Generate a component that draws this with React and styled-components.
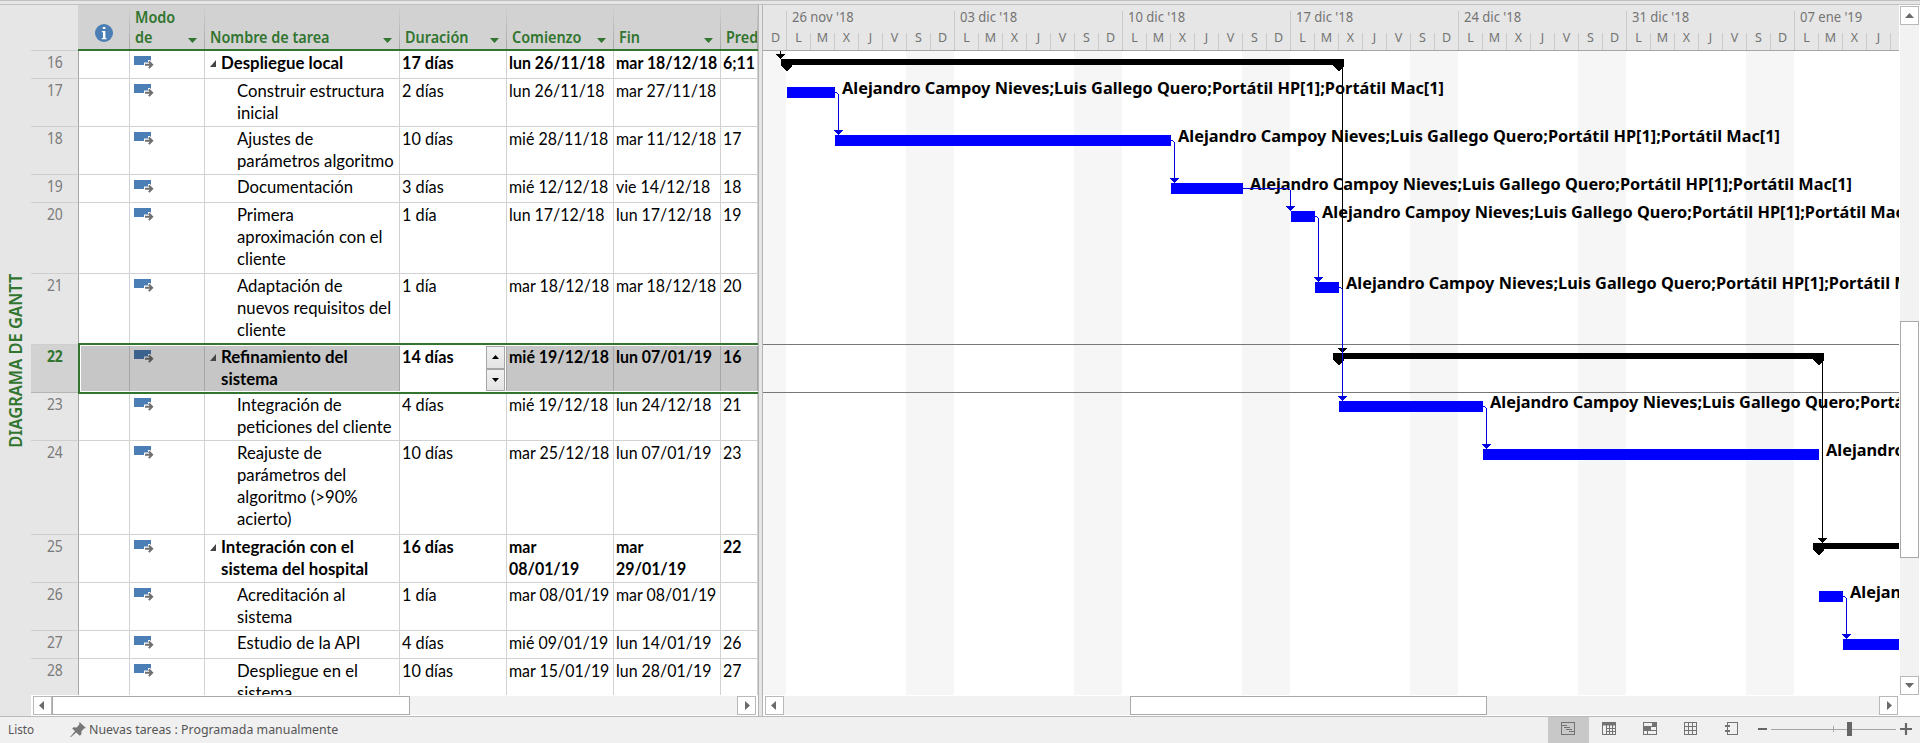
import React from "react";
import styled, { createGlobalStyle } from "styled-components";

const GlobalStyle = createGlobalStyle`
  html, body { margin: 0; padding: 0; background: #fff; }
  * { box-sizing: border-box; }
  svg { display: block; }
`;

const UI_FONT = `"Noto Sans", "Open Sans", sans-serif`;
const GRID_FONT = `Lato, "Open Sans", sans-serif`;
const GREEN = "#31752f";

/* ---------- data ---------- */

const PEOPLE = "Alejandro Campoy Nieves;Luis Gallego Quero;Portátil HP[1];Portátil Mac[1]";

const COLUMNS = [
  { key: "info", w: 51 },
  { key: "mode", w: 75, title: ["Modo", "de"] },
  { key: "name", w: 195, title: ["Nombre de tarea"] },
  { key: "dur", w: 107, title: ["Duración"] },
  { key: "start", w: 107, title: ["Comienzo"] },
  { key: "end", w: 107, title: ["Fin"] },
  { key: "pred", w: 37, title: ["Pred"], noArrow: true },
];

const ROWS = [
  { id: 16, h: 28, bold: true, name: ["Despliegue local"], dur: "17 días", start: ["lun 26/11/18"], end: ["mar 18/12/18"], pred: "6;11" },
  { id: 17, h: 48, name: ["Construir estructura", "inicial"], dur: "2 días", start: ["lun 26/11/18"], end: ["mar 27/11/18"], pred: "" },
  { id: 18, h: 48, name: ["Ajustes de", "parámetros algoritmo"], dur: "10 días", start: ["mié 28/11/18"], end: ["mar 11/12/18"], pred: "17" },
  { id: 19, h: 28, name: ["Documentación"], dur: "3 días", start: ["mié 12/12/18"], end: ["vie 14/12/18"], pred: "18" },
  { id: 20, h: 71, name: ["Primera", "aproximación con el", "cliente"], dur: "1 día", start: ["lun 17/12/18"], end: ["lun 17/12/18"], pred: "19" },
  { id: 21, h: 71, name: ["Adaptación de", "nuevos requisitos del", "cliente"], dur: "1 día", start: ["mar 18/12/18"], end: ["mar 18/12/18"], pred: "20" },
  { id: 22, h: 48, bold: true, selected: true, name: ["Refinamiento del", "sistema"], dur: "14 días", start: ["mié 19/12/18"], end: ["lun 07/01/19"], pred: "16" },
  { id: 23, h: 48, name: ["Integración de", "peticiones del cliente"], dur: "4 días", start: ["mié 19/12/18"], end: ["lun 24/12/18"], pred: "21" },
  { id: 24, h: 94, name: ["Reajuste de", "parámetros del", "algoritmo (>90%", "acierto)"], dur: "10 días", start: ["mar 25/12/18"], end: ["lun 07/01/19"], pred: "23" },
  { id: 25, h: 48, bold: true, name: ["Integración con el", "sistema del hospital"], dur: "16 días", start: ["mar", "08/01/19"], end: ["mar", "29/01/19"], pred: "22" },
  { id: 26, h: 48, name: ["Acreditación al", "sistema"], dur: "1 día", start: ["mar 08/01/19"], end: ["mar 08/01/19"], pred: "" },
  { id: 27, h: 28, name: ["Estudio de la API"], dur: "4 días", start: ["mié 09/01/19"], end: ["lun 14/01/19"], pred: "26" },
  { id: 28, h: 48, name: ["Despliegue en el", "sistema"], dur: "10 días", start: ["mar 15/01/19"], end: ["lun 28/01/19"], pred: "27" },
];

const WEEKS = ["26 nov '18", "03 dic '18", "10 dic '18", "17 dic '18", "24 dic '18", "31 dic '18", "07 ene '19"];
const DAYS = ["L", "M", "X", "J", "V", "S", "D"];

/* ---------- shell ---------- */

const Shell = styled.div`
  width: 1920px;
  height: 743px;
  display: flex;
  flex-direction: column;
  overflow: hidden;
  background: #e6e6e6;
  border-top: 1px solid #c0c0c0;
  font-family: ${UI_FONT};
`;

const Main = styled.div`
  height: 715px;
  display: flex;
  padding-top: 3px;
`;

const ViewRail = styled.div`
  width: 31px;
  flex: none;
  display: flex;
  align-items: center;
  justify-content: center;
  border-top: 1px solid #c0c0c0;
`;

const ViewName = styled.div`
  writing-mode: vertical-rl;
  transform: rotate(180deg) scaleY(0.97);
  font-size: 17px;
  line-height: 24px;
  font-weight: 600;
  color: ${GREEN};
  white-space: nowrap;
`;

const Splitter = styled.div`
  width: 5px;
  flex: none;
  border-left: 1px solid #b4b4b4;
  border-right: 1px solid #b4b4b4;
  border-top: 1px solid #c0c0c0;
`;

/* ---------- task table ---------- */

const TablePane = styled.div`
  width: 727px;
  flex: none;
  display: flex;
  flex-direction: column;
  border-top: 1px solid #c0c0c0;
`;

const HeaderRow = styled.div`
  height: 46px;
  flex: none;
  display: flex;
`;

const HeaderCorner = styled.div`
  width: 47px;
  border-bottom: 1px solid #cfcfcf;
`;

const HeaderCells = styled.div`
  display: flex;
  background: #d2d2d2;
  border-bottom: 2px solid ${GREEN};
  padding-left: 1px;
`;

const HeaderCell = styled.div`
  width: ${(p) => p.$w}px;
  height: 44px;
  display: flex;
  align-items: flex-end;
  justify-content: ${(p) => (p.$center ? "center" : "space-between")};
  padding: ${(p) => (p.$center ? "0 0 7px" : "0 7px 0 5px")};
  border-right: 1px solid;
  border-image: linear-gradient(#d2d2d2, #a6a6a6) 1;
  overflow: hidden;
`;

const HeaderTitle = styled.div`
  font-size: 16px;
  line-height: 20px;
  padding-bottom: 2px;
  font-weight: 600;
  color: ${GREEN};
  white-space: nowrap;
  transform: scaleX(0.9);
  transform-origin: 0 0;
`;

const SortArrow = styled.svg`
  flex: none;
  margin-bottom: 6px;
`;

const Rows = styled.div`
  height: 644px;
  flex: none;
  overflow: hidden;
`;

const Row = styled.div`
  display: flex;
  height: ${(p) => p.$h}px;
  position: relative;
`;

const RowNumber = styled.div`
  width: 48px;
  flex: none;
  padding: 0 14px 0 0;
  text-align: right;
  font-size: 15.5px;
  line-height: 22px;
  border-right: 1px solid #a6a6a6;
  border-bottom: 1px solid ${(p) => (p.$selected ? "#b4b4b4" : "#cfcfcf")};
  background: ${(p) => (p.$selected ? "#d2d2d2" : "#e6e6e6")};
  color: ${(p) => (p.$selected ? GREEN : "#7a7a7a")};
  font-weight: ${(p) => (p.$selected ? 700 : 400)};
`;

const NumberText = styled.span`
  display: inline-block;
  transform: scaleX(0.9);
`;

const Cell = styled.div`
  width: ${(p) => p.$w}px;
  flex: none;
  padding: 1px 0 0 2px;
  border-right: 1px solid ${(p) => (p.$selected ? "#a6a6a6" : "#d2d2d2")};
  border-bottom: 1px solid #d2d2d2;
  background: ${(p) => (p.$bg ? p.$bg : "#fff")};
  font-family: ${GRID_FONT};
  font-size: 16.5px;
  line-height: 22px;
  font-weight: ${(p) => (p.$bold ? 700 : 400)};
  color: #000;
  white-space: nowrap;
  overflow: hidden;
`;

const Line = styled.div`
  width: max-content;
  transform: scaleX(${(p) => p.$sx});
  transform-origin: 0 0;
`;

const ModeCell = styled(Cell)`
  padding: 5px 0 0 4px;
`;

const NameCell = styled(Cell)`
  display: flex;
  padding-left: ${(p) => (p.$bold ? 5 : 32)}px;
`;

const Collapse = styled.svg`
  flex: none;
  margin: 8px 5px 0 0;
`;

const DurationCell = styled(Cell)`
  display: flex;
  justify-content: space-between;
  padding-right: 1px;
`;

const Spinner = styled.div`
  width: 19px;
  height: 45px;
  display: flex;
  flex-direction: column;
`;

const SpinButton = styled.div`
  flex: 1;
  display: flex;
  align-items: center;
  justify-content: center;
  border: 1px solid #a6a6a6;
  background: linear-gradient(#f0f0f0, #e4e4e4);
`;

const SelectionFrame = styled.div`
  position: absolute;
  left: 47px;
  right: 0;
  top: -2px;
  bottom: -1px;
  border: 2px solid ${GREEN};
  border-right: 0;
  box-shadow: inset 1px 1px 0 #fff, inset 0 -1px 0 #fff;
  z-index: 2;
  pointer-events: none;
`;

/* ---------- scroll bars ---------- */

const HScroll = styled.div`
  height: 21px;
  flex: none;
  display: flex;
  padding: 1px ${(p) => p.$right}px 1px 2px;
  background: #fff;
`;

const HTrack = styled.div`
  flex: 1;
  background: #f2f2f2;
  display: flex;
`;

const HThumb = styled.div`
  width: ${(p) => p.$w}px;
  margin-left: ${(p) => p.$offset}px;
  border: 1px solid #a9a9a9;
  background: #fff;
`;

const ScrollButton = styled.div`
  width: 19px;
  height: 19px;
  flex: none;
  display: flex;
  align-items: center;
  justify-content: center;
  border: 1px solid #b9b9b9;
  background: #fff;
`;

const VScroll = styled.div`
  width: 20px;
  flex: none;
  display: flex;
  flex-direction: column;
  padding: 1px 1px 21px 0;
  background: #fff;
  border-top: 1px solid #c0c0c0;
`;

const VTrack = styled.div`
  flex: 1;
  background: #f2f2f2;
`;

const VThumb = styled.div`
  height: 237px;
  margin-top: 296px;
  border: 1px solid #a9a9a9;
  background: #fff;
`;

/* ---------- chart pane ---------- */

const ChartPane = styled.div`
  width: 1137px;
  flex: none;
  display: flex;
  flex-direction: column;
  overflow: hidden;
  border-top: 1px solid #c0c0c0;
  border-right: 1px solid #fff;
`;

const TimeScale = styled.div`
  height: 46px;
  flex: none;
  display: flex;
  overflow: hidden;
  border-bottom: 1px solid #a6a6a6;
  color: #747474;
`;

const LeadDay = styled.div`
  width: 23px;
  flex: none;
  padding-top: 28px;
`;

const Week = styled.div`
  width: 168px;
  flex: none;
  margin-top: 6px;
  border-left: 1px solid #cacaca;
`;

const WeekTitle = styled.div`
  height: 22px;
  padding-left: 5px;
  font-size: 13.5px;
  line-height: 13px;
  white-space: nowrap;
`;

const ScaleX = styled.span`
  display: inline-block;
  transform: scaleX(${(p) => p.$sx});
  transform-origin: 0 0;
`;

const DayStrip = styled.div`
  display: flex;
  margin-left: -1px;
`;

const Day = styled.div`
  width: 24px;
  height: 18px;
  text-align: center;
  font-size: 12.5px;
  line-height: 10px;
  border-left: 1px solid ${(p) => (p.$first ? "transparent" : "#cacaca")};
`;

const ChartBody = styled.svg`
  flex: none;
  background: #fff;
`;

/* ---------- status bar ---------- */

const StatusBar = styled.div`
  height: 27px;
  flex: none;
  display: flex;
  align-items: center;
  background: #f0f0f0;
  border-top: 1px solid #b9b9b9;
  color: #555;
  font-size: 13px;
`;

const StatusText = styled.div`
  width: ${(p) => p.$w}px;
  padding: 0 0 2px ${(p) => p.$pad}px;
  white-space: nowrap;
  line-height: 20px;
`;

const ViewButtons = styled.div`
  display: flex;
  margin-left: auto;
  height: 26px;
`;

const ViewButton = styled.div`
  width: 41px;
  height: 26px;
  padding: 5px 0 0 13px;
  background: ${(p) => (p.$active ? "#c8c8c8" : "transparent")};
`;

const Zoom = styled.svg`
  width: 167px;
  height: 26px;
`;

/* ---------- small drawings ---------- */

const Triangle = ({ dir, color = "#6b6b6b" }) => {
  const d = { left: "M7 1v9L2 5.5z", right: "M4 1v9l5-4.500z", up: "M1 8h9L5.500 3z", down: "M1 3h9L5.500 8z" }[dir];
  return (
    <svg width="11" height="11" viewBox="0 0 11 11">
      <path d={d} fill={color} />
    </svg>
  );
};

const InfoIcon = () => (
  <svg width="18" height="18" viewBox="0 0 18 18">
    <circle cx="9" cy="9" r="9" fill="#4a7eb5" />
    <rect x="7.800" y="3" width="2.600" height="2" fill="#fff" />
    <path d="M6.800 7h3.600v7h1.100v1.200H6.800V14H8V8.200H6.800z" fill="#fff" />
  </svg>
);

const ModeIcon = ({ selected }) => (
  <svg width="20" height="14" viewBox="0 0 20 14">
    <rect width="17" height="9" fill={selected ? "#3b618f" : "#4a7eb5"} />
    <path d="M10 6.500h4V4h2l4.500 4.500L16 13h-2v-2.500h-4z" fill={selected ? "#c6c6c6" : "#fff"} />
    <path d="M11 8.800h6.500M14.800 5.500l3.300 3.300-3.300 3.300" fill="none" stroke={selected ? "#555" : "#6e6e6e"} strokeWidth="2" />
  </svg>
);

const PinGlyph = styled.svg`
  flex: none;
`;

const PinIcon = () => (
  <PinGlyph width="17" height="16" viewBox="0 0 17 16">
    <path d="M9.500 0L16 6l-2 .6-2.500 2.600-.2 3.300-1.500 1.200-3.600-3.300L1 15l-.8.300.3-.8L5 9.200 2.200 6.500l1.300-1.300 3.200.3L9.200 2.500z" fill="#777" />
  </PinGlyph>
);

const viewIcons = [
  <g key="gantt">
    <rect x=".5" y=".5" width="13" height="12" fill="none" stroke="#737373" />
    <path d="M1 3.500h5M3 5.500h6M5 7.500h6M8 9.500h5" stroke="#737373" />
  </g>,
  <g key="usage" stroke="#737373">
    <rect x=".5" y=".5" width="13" height="12" fill="none" />
    <path d="M0 2h14" strokeWidth="3" />
    <path d="M4.500 3v10M7.500 3v10M10.500 3v10M4.500 6.500H14M4.500 9.500H14" />
  </g>,
  <g key="planner">
    <rect x=".5" y=".5" width="13" height="12" fill="none" stroke="#737373" />
    <path d="M9 0h5v4H9zM0 4h8v4H0z" fill="#737373" />
    <path d="M0 8.500h14M4.500 8v5M0 4.500h14" stroke="#737373" />
  </g>,
  <g key="sheet" fill="none" stroke="#737373">
    <rect x=".5" y=".5" width="12" height="12" />
    <path d="M4.500 0v13M8.500 0v13M0 4.500h13M0 8.500h13" />
  </g>,
  <g key="report">
    <rect x="2.500" y=".5" width="10" height="12" fill="none" stroke="#737373" />
    <path d="M0 4h5M0 9h5" stroke="#737373" strokeWidth="2" />
  </g>,
];

/* ---------- gantt drawing (page coordinates through the viewBox) ---------- */

const TASKS = [
  { x: 787, w: 48, y: 87, label: true },
  { x: 835, w: 336, y: 135, label: true },
  { x: 1171, w: 72, y: 183, label: true },
  { x: 1291, w: 24, y: 211, label: true },
  { x: 1315, w: 24, y: 282, label: true },
  { x: 1339, w: 144, y: 401, label: true },
  { x: 1483, w: 336, y: 449, label: true },
  { x: 1819, w: 24, y: 591, label: true },
  { x: 1843, w: 80, y: 639 },
];

const SUMMARIES = [
  { x1: 781, x2: 1344, y: 59 },
  { x1: 1333, x2: 1824, y: 353 },
  { x1: 1813, x2: 1960, y: 543 },
];

const LINKS = [
  { from: [835, 92], x: 838, to: 135 },
  { from: [1171, 140], x: 1174, to: 183 },
  { from: [1243, 188], x: 1290, to: 211 },
  { from: [1315, 216], x: 1318, to: 282 },
  { from: [1339, 287], x: 1342, to: 401 },
  { from: [1483, 406], x: 1486, to: 449 },
  { from: [1843, 596], x: 1846, to: 639 },
];

const Arrow = ({ x, y, color }) => <path d={`M${x - 4} ${y - 5}h9v1h-1v1h-1v1h-1v1h-1v1h-1v-1h-1v-1h-1v-1h-1v-1h-1z`} fill={color} />;

const cap = (x, y) => `M${x} ${y}h11v7l-5.500 5.500L${x} ${y + 7}z`;

function Gantt() {
  return (
    <ChartBody width="1136" height="644" viewBox="763 51 1136 644" shapeRendering="crispEdges">
      <rect x="763" y="51" width="23" height="644" fill="#f6f6f6" />
      {[0, 1, 2, 3, 4, 5].map((i) => (
        <rect key={i} x={906 + i * 168} y="51" width="48" height="644" fill="#f6f6f6" />
      ))}
      <rect x="763" y="344" width="1137" height="1" fill="#777" />
      <rect x="763" y="392" width="1137" height="1" fill="#777" />
      {TASKS.filter((t) => t.label).map((t) => (
        <text
          key={t.y}
          x={t.x + t.w + 7}
          y={t.y + 7}
          textLength="602"
          lengthAdjust="spacingAndGlyphs"
          fontFamily={UI_FONT}
          fontSize="16.500"
          fontWeight="700"
        >
          {PEOPLE}
        </text>
      ))}
      {TASKS.map((t) => (
        <rect key={t.y} x={t.x} y={t.y} width={t.w} height="11" fill="#0000ff" />
      ))}
      {SUMMARIES.map((s) => (
        <g key={s.y}>
          <rect x={s.x1} y={s.y} width={s.x2 - s.x1} height="6" />
          <path d={cap(s.x1, s.y)} />
          <path d={cap(s.x2 - 11, s.y)} />
        </g>
      ))}
      <rect x="780" y="51" width="1" height="4" />
      <Arrow x={780} y={59} color="#000" />
      <rect x="1342" y="65" width="1" height="224" />
      <Arrow x={1342} y={353} color="#000" />
      <rect x="1822" y="359" width="1" height="180" />
      <Arrow x={1822} y={543} color="#000" />
      {LINKS.map((l) => (
        <g key={l.x} fill="#0000e0">
          <rect x={l.from[0]} y={l.from[1]} width={l.x - l.from[0] - 1} height="1" />
          <rect x={l.x - 1} y={l.from[1] + 1} width="1" height="1" />
          <rect x={l.x} y={l.from[1] + 2} width="1" height={l.to - l.from[1] - 4} />
          <Arrow x={l.x} y={l.to} color="#0000e0" />
        </g>
      ))}
    </ChartBody>
  );
}

/* ---------- composed parts ---------- */

function TableHeader() {
  return (
    <HeaderRow>
      <HeaderCorner />
      <HeaderCells>
        {COLUMNS.map((c) => (
          <HeaderCell key={c.key} $w={c.w} $center={!c.title}>
            {c.title ? (
              <HeaderTitle>
                {c.title.map((t) => (
                  <div key={t}>{t}</div>
                ))}
              </HeaderTitle>
            ) : (
              <InfoIcon />
            )}
            {c.title && !c.noArrow && (
              <SortArrow width="9" height="5" viewBox="0 0 9 5">
                <path d="M0 0h9L4.500 5z" fill={GREEN} />
              </SortArrow>
            )}
          </HeaderCell>
        ))}
      </HeaderCells>
    </HeaderRow>
  );
}

function TaskRow({ row }) {
  const { bold, selected } = row;
  const bg = selected ? "#c6c6c6" : undefined;
  const common = { $bold: bold, $selected: selected, $bg: bg };
  const lines = (list, sx = 0.965) => list.map((t) => <Line key={t} $sx={sx}>{t}</Line>);
  return (
    <Row $h={row.h}>
      <RowNumber $selected={selected}>
        <NumberText>{row.id}</NumberText>
      </RowNumber>
      <Cell $w={51} {...common} />
      <ModeCell $w={75} {...common}>
        <ModeIcon selected={selected} />
      </ModeCell>
      <NameCell $w={195} {...common}>
        {bold && (
          <Collapse width="6" height="7" viewBox="0 0 6 7">
            <path d="M6 0v7H0z" fill="#444" />
          </Collapse>
        )}
        <div>{lines(row.name, bold ? 1.02 : 1.012)}</div>
      </NameCell>
      <DurationCell $w={107} {...common} $bg={undefined}>
        <div>{lines([row.dur], 0.985)}</div>
        {selected && (
          <Spinner>
            <SpinButton><svg width="7" height="4"><path d="M0 4h7L3.500 0z" /></svg></SpinButton>
            <SpinButton><svg width="7" height="4"><path d="M0 0h7L3.500 4z" /></svg></SpinButton>
          </Spinner>
        )}
      </DurationCell>
      <Cell $w={107} {...common}>{lines(row.start)}</Cell>
      <Cell $w={107} {...common}>{lines(row.end)}</Cell>
      <Cell $w={37} {...common}>{lines([row.pred])}</Cell>
      {selected && <SelectionFrame />}
    </Row>
  );
}

function Timeline() {
  return (
    <TimeScale>
      <LeadDay>
        <Day $first>D</Day>
      </LeadDay>
      {WEEKS.map((w) => (
        <Week key={w}>
          <WeekTitle>
            <ScaleX $sx={0.965}>{w}</ScaleX>
          </WeekTitle>
          <DayStrip>
            {DAYS.map((d, i) => (
              <Day key={d} $first={i === 0}>{d}</Day>
            ))}
          </DayStrip>
        </Week>
      ))}
    </TimeScale>
  );
}

export default function App() {
  return (
    <Shell>
      <GlobalStyle />
      <Main>
        <ViewRail>
          <ViewName>DIAGRAMA DE GANTT</ViewName>
        </ViewRail>
        <TablePane>
          <TableHeader />
          <Rows>
            {ROWS.map((r) => (
              <TaskRow key={r.id} row={r} />
            ))}
          </Rows>
          <HScroll $right={2}>
            <ScrollButton><Triangle dir="left" /></ScrollButton>
            <HTrack><HThumb $w={358} $offset={0} /></HTrack>
            <ScrollButton><Triangle dir="right" /></ScrollButton>
          </HScroll>
        </TablePane>
        <Splitter />
        <ChartPane>
          <Timeline />
          <Gantt />
          <HScroll $right={1}>
            <ScrollButton><Triangle dir="left" /></ScrollButton>
            <HTrack><HThumb $w={357} $offset={346} /></HTrack>
            <ScrollButton><Triangle dir="right" /></ScrollButton>
          </HScroll>
        </ChartPane>
        <VScroll>
          <ScrollButton><Triangle dir="up" /></ScrollButton>
          <VTrack><VThumb /></VTrack>
          <ScrollButton><Triangle dir="down" /></ScrollButton>
        </VScroll>
      </Main>
      <StatusBar>
        <StatusText $w={70} $pad={8}><ScaleX $sx={0.9}>Listo</ScaleX></StatusText>
        <PinIcon />
        <StatusText $w={300} $pad={2}><ScaleX $sx={0.952}>Nuevas tareas : Programada manualmente</ScaleX></StatusText>
        <ViewButtons>
          {viewIcons.map((icon, i) => (
            <ViewButton key={icon.key} $active={i === 0}>
              <svg width="14" height="13" viewBox="0 0 14 13">{icon}</svg>
            </ViewButton>
          ))}
        </ViewButtons>
        <Zoom viewBox="1753 717 167 26">
          <rect x="1758" y="728" width="9" height="2" fill="#666" />
          <rect x="1771" y="729" width="125" height="1" fill="#a6a6a6" />
          <rect x="1833" y="726" width="1" height="6" fill="#a6a6a6" />
          <rect x="1847" y="722" width="5" height="14" fill="#666" />
          <path d="M1900 729h12M1906 723v12" stroke="#666" strokeWidth="2.200" />
        </Zoom>
      </StatusBar>
    </Shell>
  );
}
